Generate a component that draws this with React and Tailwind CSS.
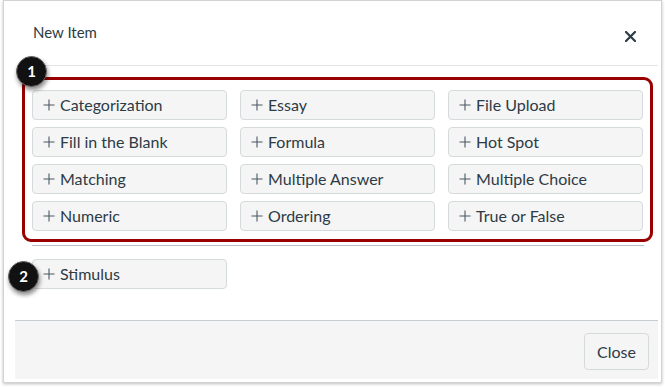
import React from "react";

const items = [
  "Categorization", "Essay", "File Upload",
  "Fill in the Blank", "Formula", "Hot Spot",
  "Matching", "Multiple Answer", "Multiple Choice",
  "Numeric", "Ordering", "True or False",
];

function PlusIcon() {
  return (
    <svg width="12" height="12" viewBox="0 0 12 12" className="shrink-0">
      <path d="M6 0.5V11.5M0.5 6H11.5" stroke="#4b5863" strokeWidth="1.1" fill="none" />
    </svg>
  );
}

function ItemButton({ label }) {
  return (
    <div className="h-[30px] w-[195px] flex items-center pl-[10px] gap-[5px] rounded-[4px] border border-[#d5dadd] bg-[#f5f5f5] text-[16px] text-[#2d3b45]">
      <PlusIcon />
      <span className="leading-none">{label}</span>
    </div>
  );
}

function Badge({ n, className }) {
  return (
    <div
      className={
        "absolute w-[31px] h-[31px] rounded-full bg-[#111] text-white text-[15px] font-bold flex items-center justify-center border border-[#666] shadow-[1px_3px_4px_rgba(0,0,0,0.45)] " +
        className
      }
    >
      {n}
    </div>
  );
}

export default function App() {
  return (
    <div className="relative w-[665px] h-[387px] bg-white overflow-hidden" style={{ fontFamily: "Lato, 'Liberation Sans', sans-serif" }}>
      <div className="ml-[3px] w-[659px] h-[383px] border border-[#cfd3d6] shadow-[0_1px_3px_rgba(0,0,0,0.25)] flex flex-col bg-white">
        {/* header */}
        <div className="ml-[28px] mr-[3px] h-[65px] border-b border-[#e2e5e7] flex items-center justify-between pl-[1px] pr-[22px] shrink-0">
          <span className="text-[15px] text-[#2d3b45] pb-[1px]">New Item</span>
          <svg width="11" height="11" viewBox="0 0 11 11" className="mt-[6px]">
            <path d="M1 1L10 10M10 1L1 10" stroke="#2d3b45" strokeWidth="2.2" strokeLinecap="square" />
          </svg>
        </div>

        {/* red frame with grid */}
        <div className="ml-[18px] mt-[11px] w-[631px] border-[3px] border-[#990000] rounded-[9px] pt-[10px] pb-[8px] pl-[7px] pr-[7px]">
          <div className="grid grid-cols-[195px_195px_195px] gap-x-[13px] gap-y-[7px]">
            {items.map((it) => (
              <ItemButton key={it} label={it} />
            ))}
          </div>
        </div>

        <div className="ml-[28px] mt-[3px] w-[612px] h-[1px] bg-[#b8bfc4]" />

        <div className="ml-[28px] mt-[13px]">
          <ItemButton label="Stimulus" />
        </div>

        <div className="flex-1" />

        {/* footer */}
        <div className="ml-[11px] mr-[3px] h-[59px] border-t border-[#c7cdd1] bg-[#f5f5f5] flex justify-end items-start pt-[12px] pr-[9px]">
          <div className="h-[37px] w-[65px] rounded-[4px] border border-[#d5dadd] bg-[#f5f5f5] flex items-center justify-center text-[16px] text-[#2d3b45]">
            Close
          </div>
        </div>
        <div className="h-[3px] shrink-0" />
      </div>

      <Badge n="1" className="left-[16px] top-[56px]" />
      <Badge n="2" className="left-[8px] top-[261px]" />
    </div>
  );
}
